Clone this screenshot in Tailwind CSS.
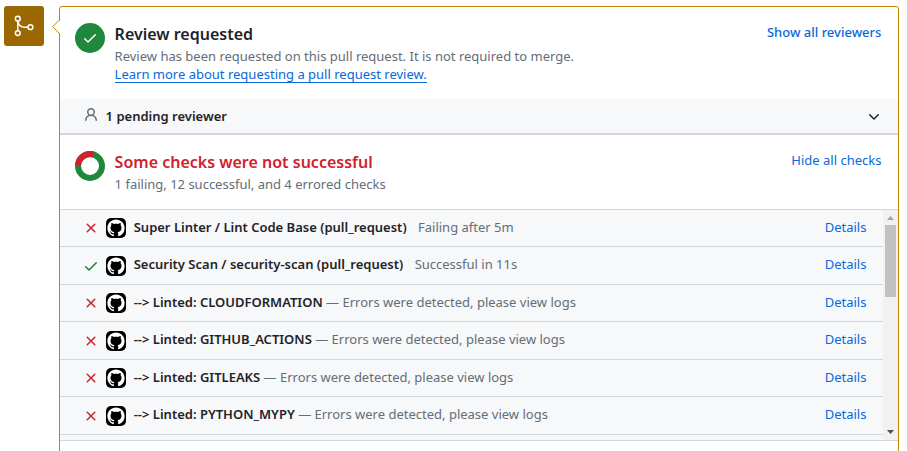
<!DOCTYPE html>
<html lang="en">
<head>
<meta charset="utf-8">
<title>Pull request checks</title>
<script src="https://cdn.jsdelivr.net/npm/@tailwindcss/browser@4"></script>
</head>
<body class="h-[451px] overflow-hidden bg-white font-['Noto_Sans',sans-serif] text-[13px] leading-[18px] text-[#656d76]">
<svg class="hidden">
  <symbol id="x" viewBox="0 0 16 16"><path d="M3.72 3.72a.75.75 0 0 1 1.06 0L8 6.94l3.22-3.22a.75.75 0 1 1 1.06 1.06L9.06 8l3.22 3.22a.75.75 0 1 1-1.06 1.06L8 9.06l-3.22 3.22a.75.75 0 0 1-1.06-1.06L6.94 8 3.72 4.78a.75.75 0 0 1 0-1.06Z"/></symbol>
  <symbol id="check" viewBox="0 0 16 16"><path d="M13.78 4.22a.75.75 0 0 1 0 1.06l-7.25 7.25a.75.75 0 0 1-1.06 0L2.22 9.28a.75.75 0 0 1 1.06-1.06L6 10.94l6.72-6.72a.75.75 0 0 1 1.06 0Z"/></symbol>
  <symbol id="gh" viewBox="0 0 20 20"><rect width="20" height="20" rx="5" fill="#000"/><path transform="translate(1.4 1.5) scale(1.075)" fill="#fff" d="M8 0C3.58 0 0 3.58 0 8c0 3.54 2.29 6.53 5.47 7.59.4.07.55-.17.55-.38 0-.19-.01-.82-.01-1.49-2.01.37-2.53-.49-2.69-.94-.09-.23-.48-.94-.82-1.13-.28-.15-.68-.52-.01-.53.63-.01 1.08.58 1.23.82.72 1.21 1.87.87 2.33.66.07-.52.28-.87.51-1.07-1.78-.2-3.64-.89-3.64-3.95 0-.87.31-1.59.82-2.15-.08-.2-.36-1.02.08-2.12 0 0 .67-.21 2.2.82.64-.18 1.32-.27 2-.27s1.36.09 2 .27c1.53-1.04 2.2-.82 2.2-.82.44 1.1.16 1.92.08 2.12.51.56.82 1.27.82 2.15 0 3.07-1.87 3.75-3.65 3.95.29.25.54.73.54 1.48 0 1.07-.01 1.93-.01 2.2 0 .21.15.46.55.38A8.01 8.01 0 0 0 16 8c0-4.42-3.58-8-8-8Z"/></symbol>
</svg>
<div class="flex h-full items-start pl-1 pt-1.5">
  <div class="flex size-10 shrink-0 items-center justify-center rounded-[3px] bg-[#9a6700]">
    <svg class="size-6" viewBox="0 0 24 24" fill="none" stroke="#fff" stroke-width="1.5"><circle cx="5.8" cy="4.7" r="2.4"/><circle cx="5.8" cy="19.1" r="2.4"/><circle cx="18.4" cy="13.2" r="2.4"/><path d="M5.8 7.1v9.6M6 7.8c.8 3.4 3.3 5.4 6.5 5.4H16"/></svg>
  </div>
  <main class="relative ml-[15px] h-[460px] w-[840px] shrink-0 rounded-[3px] border border-[#bf8700]">
    <svg class="absolute -left-[8px] top-[12px] h-[16px] w-[9px]" viewBox="0 0 9 16"><path d="M9 0 1 8l8 8" fill="#fff"/><path d="M7.7 .7.7 7.7l7 7" fill="none" stroke="#bf8700"/></svg>
    <section class="flex h-[92px] pl-[15px] pr-[16.6px] pt-4">
      <div class="flex size-[30px] items-center justify-center rounded-full bg-[#1f883d]"><svg class="size-4 fill-white"><use href="#check"/></svg></div>
      <div class="ml-[9.6px] flex-1">
        <h3 class="h-6 text-[16px] leading-[23px] font-semibold text-[#1f2328]">Review requested</h3>
        <p>Review has been requested on this pull request. It is not required to merge.</p>
        <a class="inline-block h-[18px] border-b border-[#0969da] text-[#0969da]">Learn more about requesting a pull request review.</a>
      </div>
      <a class="font-medium text-[#0969da]">Show all reviewers</a>
    </section>
    <section class="flex h-9 border-b-2 border-[#d0d7de] bg-[#f6f8fa] pl-[23px] pr-4 pt-2">
      <svg class="size-4 fill-[#656d76]" viewBox="0 0 16 16"><path d="M10.561 8.073a6.005 6.005 0 0 1 3.432 5.142.75.75 0 1 1-1.498.07 4.5 4.5 0 0 0-8.99 0 .75.75 0 0 1-1.498-.07 6.004 6.004 0 0 1 3.431-5.142 3.999 3.999 0 1 1 5.123 0ZM10.5 5a2.5 2.5 0 1 0-5 0 2.5 2.5 0 0 0 5 0Z"/></svg>
      <span class="ml-[6.6px] flex-1 font-semibold text-[#1f2328]">1 pending reviewer</span>
      <svg class="mt-[2px] size-4 fill-[#1f2328]" viewBox="0 0 16 16"><path d="M12.78 5.22a.749.749 0 0 1 0 1.06l-4.25 4.25a.749.749 0 0 1-1.06 0L3.22 6.28a.749.749 0 1 1 1.06-1.06L8 8.939l3.72-3.719a.749.749 0 0 1 1.06 0Z"/></svg>
    </section>
    <section class="flex h-[75px] border-b border-[#d0d7de] pl-[15px] pr-[16.6px] pt-4">
      <svg class="size-[30px]" viewBox="0 0 30 30" fill="none" stroke-width="6"><circle cx="15" cy="15" r="12" stroke="#1f883d"/><path d="M3 14.6A12 12 0 0 1 18.6 3.55" stroke="#cf222e"/></svg>
      <div class="ml-[9.6px] flex-1">
        <h3 class="h-6 text-[16px] leading-[23px] font-semibold text-[#cf222e]">Some checks were not successful</h3>
        <p>1 failing, 12 successful, and 4 errored checks</p>
      </div>
      <a class="text-[#0969da]">Hide all checks</a>
    </section>
    <section class="flex h-[231px] overflow-hidden border-b border-[#d0d7de] bg-[#f6f8fa]">
      <div class="flex-1">
        <div class="flex h-[37px] border-b border-[#d0d7de] pl-[23px] pr-[16.6px] pt-2"><svg class="mt-[2px] size-4 fill-[#cf222e]"><use href="#x"/></svg><svg class="ml-[7px] mr-[7.7px] size-5"><use href="#gh"/></svg><b class="font-semibold text-[#1f2328]">Super Linter / Lint Code Base (pull_request)</b><span class="ml-[11.4px] flex-1">Failing after 5m</span><a class="text-[#0969da]">Details</a></div>
        <div class="flex h-[38px] border-b border-[#d0d7de] pl-[23px] pr-[16.6px] pt-2"><svg class="mt-[3px] size-4 fill-[#1a7f37]"><use href="#check"/></svg><svg class="ml-[7px] mr-[7.7px] mt-px size-5"><use href="#gh"/></svg><b class="font-semibold text-[#1f2328]">Security Scan / security-scan (pull_request)</b><span class="ml-[11.4px] flex-1">Successful in 11s</span><a class="text-[#0969da]">Details</a></div>
        <div class="flex h-[37px] border-b border-[#d0d7de] pl-[23px] pr-[16.6px] pt-2"><svg class="mt-[2px] size-4 fill-[#cf222e]"><use href="#x"/></svg><svg class="ml-[7px] mr-[7.7px] size-5"><use href="#gh"/></svg><b class="font-semibold text-[#1f2328]">--&gt; Linted: CLOUDFORMATION</b><span class="ml-[3.4px] flex-1">— Errors were detected, please view logs</span><a class="text-[#0969da]">Details</a></div>
        <div class="flex h-[38px] border-b border-[#d0d7de] pl-[23px] pr-[16.6px] pt-2"><svg class="mt-[3px] size-4 fill-[#cf222e]"><use href="#x"/></svg><svg class="ml-[7px] mr-[7.7px] mt-px size-5"><use href="#gh"/></svg><b class="font-semibold text-[#1f2328]">--&gt; Linted: GITHUB_ACTIONS</b><span class="ml-[3.4px] flex-1">— Errors were detected, please view logs</span><a class="text-[#0969da]">Details</a></div>
        <div class="flex h-[37px] border-b border-[#d0d7de] pl-[23px] pr-[16.6px] pt-2"><svg class="mt-[2px] size-4 fill-[#cf222e]"><use href="#x"/></svg><svg class="ml-[7px] mr-[7.7px] size-5"><use href="#gh"/></svg><b class="font-semibold text-[#1f2328]">--&gt; Linted: GITLEAKS</b><span class="ml-[3.4px] flex-1">— Errors were detected, please view logs</span><a class="text-[#0969da]">Details</a></div>
        <div class="flex h-[38px] border-b border-[#d0d7de] pl-[23px] pr-[16.6px] pt-2"><svg class="mt-[3px] size-4 fill-[#cf222e]"><use href="#x"/></svg><svg class="ml-[7px] mr-[7.7px] mt-px size-5"><use href="#gh"/></svg><b class="font-semibold text-[#1f2328]">--&gt; Linted: PYTHON_MYPY</b><span class="ml-[3.4px] flex-1">— Errors were detected, please view logs</span><a class="text-[#0969da]">Details</a></div>
      </div>
      <div class="flex w-[15px] flex-col items-center bg-[#f1f1f1]">
        <svg class="h-[15px] w-[15px] fill-[#a3a3a3]" viewBox="0 0 15 15"><path d="M4 10 7.5 6 11 10Z"/></svg>
        <div class="h-[72px] w-[11px] bg-[#c1c1c1]"></div>
        <svg class="mt-auto h-[15px] w-[15px] fill-[#505050]" viewBox="0 0 15 15"><path d="M4 5 7.5 9 11 5Z"/></svg>
      </div>
    </section>
  </main>
</div>
</body>
</html>
